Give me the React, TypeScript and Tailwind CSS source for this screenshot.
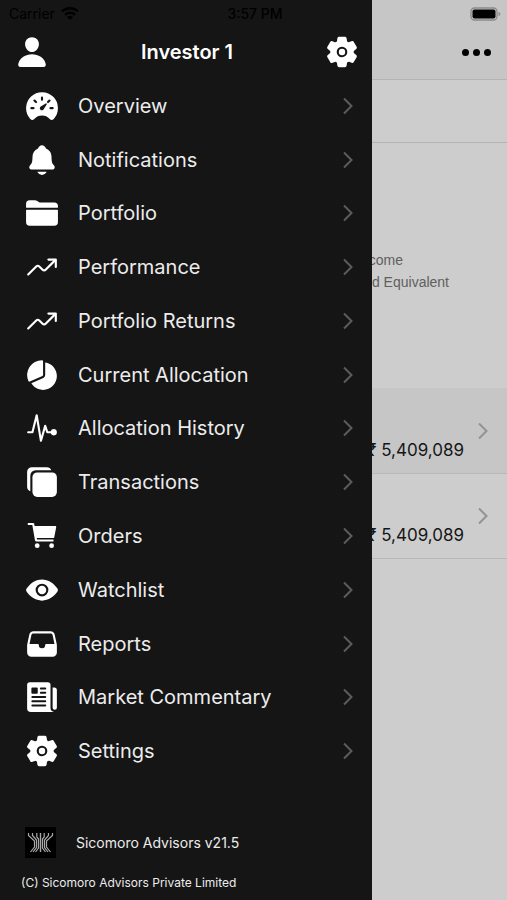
import type { IconType } from "react-icons";
import {
  IoCopy,
  IoEye,
  IoFileTray,
  IoFolder,
  IoNewspaper,
  IoNotifications,
  IoPerson,
  IoPieChart,
  IoPulse,
  IoSettings,
  IoSpeedometer,
  IoTrendingUp,
} from "react-icons/io5";

interface MenuItem {
  label: string;
  icon: IconType | typeof CartIcon;
}

function CartIcon({ className }: { className?: string }) {
  return (
    <svg viewBox="0 0 34 34" className={className} fill="currentColor" aria-hidden="true">
      <path d="M2.800 4h5.400c.5 0 .9.300 1 .8L9.600 7h20.600c.7 0 1.100.6 1 1.200l-2 10.200c-.1.400-.4.600-.8.600H11.800l.2 1.400h16.500v2H11c-.5 0-.9-.3-1-.8L7.300 6.100H2.800z" />
      <circle cx="12.200" cy="26.700" r="2.400" />
      <circle cx="26.600" cy="26.700" r="2.400" />
    </svg>
  );
}

const menu: MenuItem[] = [
  { label: "Overview", icon: IoSpeedometer },
  { label: "Notifications", icon: IoNotifications },
  { label: "Portfolio", icon: IoFolder },
  { label: "Performance", icon: IoTrendingUp },
  { label: "Portfolio Returns", icon: IoTrendingUp },
  { label: "Current Allocation", icon: IoPieChart },
  { label: "Allocation History", icon: IoPulse },
  { label: "Transactions", icon: IoCopy },
  { label: "Orders", icon: CartIcon },
  { label: "Watchlist", icon: IoEye },
  { label: "Reports", icon: IoFileTray },
  { label: "Market Commentary", icon: IoNewspaper },
  { label: "Settings", icon: IoSettings },
];

function Chevron({ className }: { className: string }) {
  return (
    <svg viewBox="0 0 10 18" className={`h-[18px] w-[10px] shrink-0 ${className}`} fill="none" aria-hidden="true">
      <path d="M1 1.500 8.500 9 1 16.500" stroke="currentColor" strokeWidth="2" />
    </svg>
  );
}

function Logo() {
  return (
    <svg viewBox="0 0 31 31" className="size-[31px] shrink-0 bg-black" fill="none" stroke="#a8a8a8" aria-hidden="true">
      <path d="M15.500 6v19" strokeWidth="1.400" />
      <path d="M11.800 6v4l1.700 2v9l-3 4M19.200 6v4l-1.700 2v9l3 4" strokeWidth="1.200" />
      <path d="M7.500 6v2.500l4 4.500v7.500l-3.500 4.500M23.500 6v2.500l-4 4.500v7.500l3.500 4.500" strokeWidth="1.200" />
      <path d="M3.500 6v2.500l6 5.500v6l-4 5M27.500 6v2.500l-6 5.500v6l4 5" strokeWidth="1.200" />
    </svg>
  );
}

function StatusBar() {
  return (
    <div className="absolute inset-x-0 top-0 z-20 grid h-[27px] grid-cols-3 items-center pr-[6px] pl-[9px] text-[14px] text-black">
      <div className="flex items-center gap-[6px]">
        <span>Carrier</span>
        <svg viewBox="0 0 18 13" className="h-[13px] w-[18px]" fill="none" stroke="black" strokeWidth="2.400" aria-hidden="true">
          <path d="M1 4.500a11.500 11.500 0 0 1 16 0M4 7.800a7.200 7.200 0 0 1 10 0" />
          <path d="M9 13 6 10a4.200 4.200 0 0 1 6 0z" fill="black" stroke="none" />
        </svg>
      </div>
      <span className="text-center font-medium">3:57 PM</span>
      <svg viewBox="0 0 31 14" className="h-[14px] w-[31px] justify-self-end" aria-hidden="true">
        <rect x="1" y="1" width="26" height="12" rx="3.500" fill="none" stroke="#8a8a8a" strokeWidth="1.300" />
        <rect x="2.500" y="2.500" width="23" height="9" rx="2" fill="black" />
        <path d="M28.500 5v4c1.200-.4 1.800-1.200 1.800-2s-.6-1.600-1.800-2z" fill="#8a8a8a" />
      </svg>
    </div>
  );
}

function HoldingRow({ className }: { className: string }) {
  return (
    <div className={`flex items-center justify-end border-b border-[#b8b8b8] pr-[19px] ${className}`}>
      <span className="mr-[14px] pt-[38px] text-[17px] leading-6 text-[#161616]">₹ 5,409,089</span>
      <Chevron className="text-[#929292]" />
    </div>
  );
}

function Dashboard() {
  return (
    <main className="flex min-h-screen flex-col bg-[#cdcdcd]">
      <header className="flex h-20 items-center justify-end border-b border-[#b4b4b4] bg-[#c6c6c6] pt-[25px] pr-4">
        <button type="button" aria-label="More" className="flex gap-1">
          <span className="size-[7px] rounded-full bg-black" />
          <span className="size-[7px] rounded-full bg-black" />
          <span className="size-[7px] rounded-full bg-black" />
        </button>
      </header>
      <div className="h-[63px] border-b border-[#b4b4b4]" />
      <div className="flex h-[245px] justify-end pt-[106px] pr-[58px] font-['Liberation_Sans',Arial,sans-serif] text-[14px] leading-[22px] text-[#606060]">
        <ul>
          <li>Fixed Income</li>
          <li>Cash And Equivalent</li>
        </ul>
      </div>
      <HoldingRow className="h-[86px] bg-[#c6c6c6]" />
      <HoldingRow className="h-[85px]" />
    </main>
  );
}

function Drawer() {
  return (
    <aside className="absolute inset-y-0 right-[135px] left-0 z-10 flex flex-col bg-[#151515] text-[#ececec]">
      <header className="flex h-[79px] items-center justify-between pt-[25px] pr-[13px] pl-[15px] text-white">
        <button type="button" aria-label="Profile">
          <IoPerson className="size-[34px]" />
        </button>
        <h1 className="text-[20px] font-semibold">Investor 1</h1>
        <button type="button" aria-label="Preferences">
          <IoSettings className="size-[34px]" />
        </button>
      </header>
      <nav className="flex-1">
        <ul className="flex h-full flex-col">
          {menu.map(({ label, icon: Icon }) => (
            <li key={label} className="flex-1">
              <a href="#" className="flex h-full items-center pr-[19px] pl-[25px]">
                <Icon className="size-[34px] shrink-0 text-white" />
                <span className="ml-[19px] flex-1 text-[20px]">{label}</span>
                <Chevron className="text-[#5c5c5c]" />
              </a>
            </li>
          ))}
        </ul>
      </nav>
      <footer className="h-[122px] pt-[49px] pl-[21px]">
        <div className="flex items-center gap-5 pl-1 text-[14px]">
          <Logo />
          <span>Sicomoro Advisors v21.5</span>
        </div>
        <p className="mt-4 text-[12px] leading-[18px]">(C) Sicomoro Advisors Private Limited</p>
      </footer>
    </aside>
  );
}

export default function App() {
  return (
    <div className="relative min-h-screen overflow-hidden font-[Inter,Roboto,sans-serif]">
      <StatusBar />
      <Dashboard />
      <Drawer />
    </div>
  );
}
